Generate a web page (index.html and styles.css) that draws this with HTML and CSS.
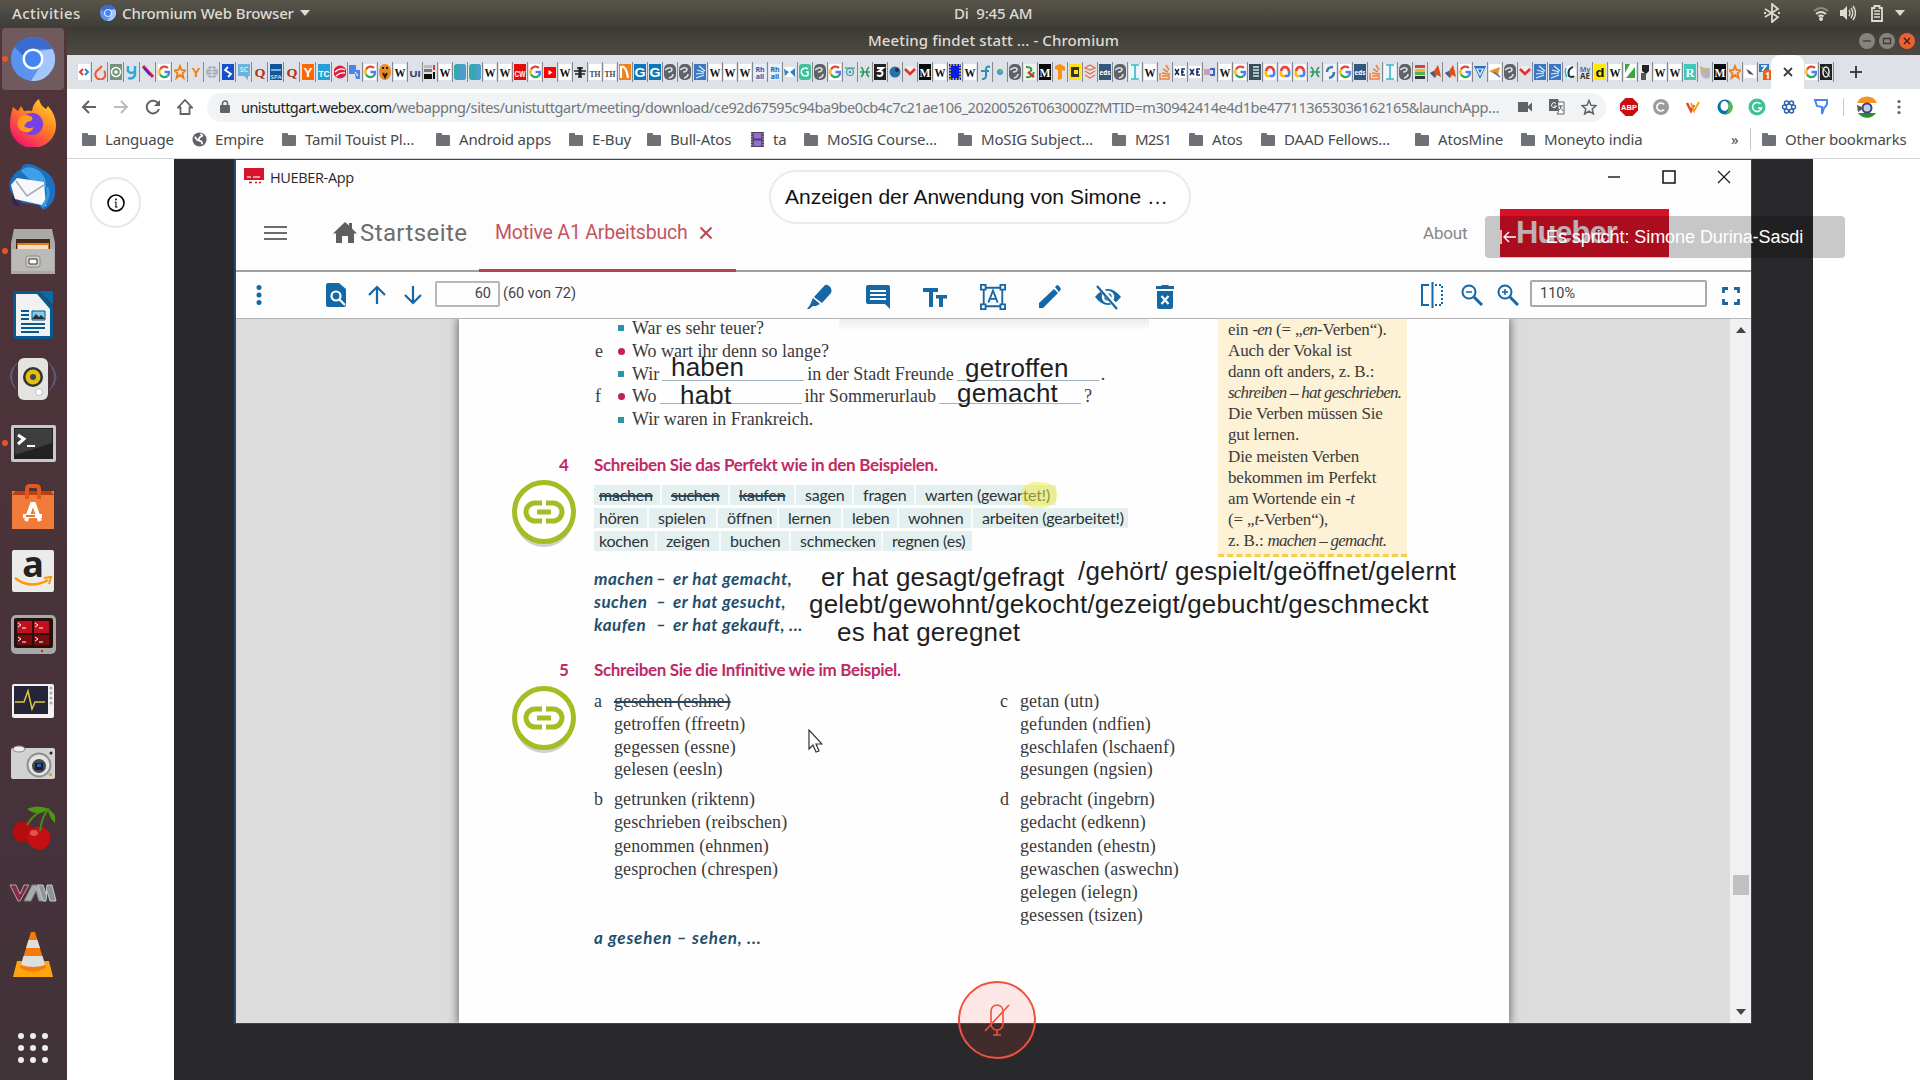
FILE: index.html
```html
<!DOCTYPE html>
<html lang="de">
<head>
<meta charset="utf-8">
<title>Meeting findet statt ... - Chromium</title>
<link rel="stylesheet" href="styles.css">
</head>
<body>
<div class="desktop">
  <header class="topbar">
    <span class="activities">Activities</span>
    <svg class="app-ico" viewBox="0 0 44 44"><use href="#chromium"/></svg>
    <span class="app-name">Chromium Web Browser</span>
    <i class="caret"></i>
    <span class="clock">Di&nbsp; 9:45 AM</span>
    <div class="tray">
      <svg class="bt" viewBox="0 0 18 20"><path d="M2 6l13 8-6 5V1l6 5L2 14M1 10h2M15 10h2" fill="none" stroke="#dfdbd2" stroke-width="1.8"/></svg>
      <svg class="wifi" viewBox="0 0 16 16"><g fill="none" stroke-width="2"><path d="M1 6q7-6 14 0" stroke="#8d8a83"/><path d="M3 9q5-4 10 0M5.500 11.500q2.500-2 5 0" stroke="#dfdbd2"/></g><circle cx="8" cy="14" r="2" fill="#dfdbd2"/></svg>
      <svg class="vol" viewBox="0 0 16 16"><path d="M0 5h3l4-4v14l-4-4H0z" fill="#dfdbd2"/><path d="M9 5q2 3 0 6M11 3q3.500 5 0 10M13 1q5 7 0 14" fill="none" stroke="#dfdbd2" stroke-width="1.400"/></svg>
      <svg class="bat" viewBox="0 0 12 17"><path d="M1 3h2.500V1h5v2H11v13H1z" fill="none" stroke="#dfdbd2" stroke-width="1.800"/><path d="M3 6h6M3 9h6M3 12h6" stroke="#dfdbd2" stroke-width="1.600"/></svg>
      <i class="caret"></i>
    </div>
  </header>

  <div class="workspace">
    <nav class="dock">
      <div class="dock-item active running"><svg viewBox="0 0 48 48"><use href="#chromium" x="2" y="2" width="44" height="44"/></svg></div>
      <div class="dock-item"><svg viewBox="0 0 48 48">
        <defs><linearGradient id="fx" x1="1" y1="0" x2="0.300" y2="1"><stop offset="0" stop-color="#ffe43f"/><stop offset=".45" stop-color="#ff8a1d"/><stop offset="1" stop-color="#f5156c"/></linearGradient></defs>
        <path d="M4 8l5 4 3-5 3 5q5-1 8 0 1-8 7-12 1 6 7 10l2-3q8 9 8 19a22.500 22 0 0 1-46 1Q1 16 4 8z" fill="url(#fx)"/>
        <circle cx="23" cy="25" r="11" fill="#7542e5"/><path d="M11 18q6-4 12 0 2 4-5 5l-3 4q5 4 10 1-4 9-14 3-5-6 0-13z" fill="#ff9a24"/></svg></div>
      <div class="dock-item"><svg viewBox="0 0 48 48">
        <path d="M14 2Q22-1 32 6q12 5 14 17 2 18-12 24l-4-5-16-2Q-2 32 1 18q4-9 10-11z" fill="#1f6fc0"/><path d="M12 8q6-7 17-1 9 6 8 18L20 16z" fill="#3fa0e8"/><path d="M8 15l27 4 2 24L6 36 2 22z" fill="#f8f8fa"/><path d="M7 18l11 15 17-11" fill="none" stroke="#a5aab5" stroke-width="1.500"/><path d="M3 33l5 6 4 6-8-4z" fill="#2b2266"/><path d="M38 24q4 10-5 20" stroke="#2d9be3" stroke-width="3" fill="none"/></svg></div>
      <div class="dock-item running"><svg viewBox="0 0 48 48"><path d="M5 2h38l3 14v31H2V16z" fill="#aaa9a6"/><path d="M7 12h34v10H7z" fill="#442a1a"/><path d="M8 16h32v6H8z" fill="#e07d22"/><path d="M9 18h30v4H9z" fill="#f5dfc4"/><path d="M3 22h42v22H3z" fill="#bcbab7"/><rect x="17" y="29" width="14" height="11" rx="2" fill="#d2d0cd" stroke="#888"/><path d="M20 32h8v5h-8z" fill="#fff" stroke="#333"/></svg></div>
      <div class="dock-item"><svg viewBox="0 0 48 48"><path d="M4 0h26l14 16v29q0 3-3 3H7q-3 0-3-3z" fill="#075a8d"/><path d="M30 0h14v14z" fill="#0b6aa5"/><path d="M7 3h21l13 15v27H7z" fill="#f1f1f1"/><path d="M12 20h8M12 24h8M12 28h8M12 33h24M12 37h24M12 41h18" stroke="#075a8d" stroke-width="2"/><path d="M23 20h13v9H23z" fill="#89c9ef" stroke="#075a8d"/><path d="M23 28l4-5 3 3 2-2 4 4z" fill="#233"/></svg></div>
      <div class="dock-item"><svg viewBox="0 0 48 48"><path d="M8 8Q-5 20 7 34M40 8q14 14 0 28M5 12q-5 10 0 20M43 12q5 10 0 20" fill="none" stroke="#59648f"/><rect x="9" y="3" width="30" height="42" rx="6" fill="#e3e3df"/><circle cx="24" cy="22" r="10" fill="#333"/><circle cx="24" cy="22" r="7.500" fill="#e1bf14"/><circle cx="24" cy="22" r="3" fill="#444"/><circle cx="30" cy="37" r="3.500" fill="#fff" stroke="#bbb"/></svg></div>
      <div class="dock-item running"><svg viewBox="0 0 48 48"><rect x="2" y="6" width="45" height="37" rx="2" fill="#c9c8c8"/><path d="M5 9h39v31H5z" fill="#222"/><path d="M6 10h37v14L6 36z" fill="#3d3e3f"/><path d="M9 16l6 4-6 5" fill="none" stroke="#fff" stroke-width="3"/><path d="M18 27h8" stroke="#fff" stroke-width="2"/></svg></div>
      <div class="dock-item"><svg viewBox="0 0 48 48"><path d="M3 8h42v38H3z" fill="#f07b3a"/><path d="M3 12l3-4h36l3 4z" fill="#b8420f"/><path d="M18 16V6q0-3 3-3h6q3 0 3 3v10" fill="none" stroke="#e2571e" stroke-width="4"/><path d="M17 38l6-17h2l6 17M14 33h19" fill="none" stroke="#fff" stroke-width="4"/><path d="M17 33h9" stroke="#f07030" stroke-width="2"/></svg></div>
      <div class="dock-item"><svg viewBox="0 0 48 48"><rect x="3" y="3" width="42" height="42" rx="2" fill="#ebebeb"/><text x="24" y="30" text-anchor="middle" class="amazon-a">a</text><path d="M6 31q15 12 33 2" fill="none" stroke="#f90" stroke-width="2.500"/><path d="M35 31l7-1-2 7" fill="none" stroke="#f90" stroke-width="2"/></svg></div>
      <div class="dock-item"><svg viewBox="0 0 48 48"><rect x="2" y="4" width="45" height="39" rx="5" fill="#a7a9a5"/><rect x="5" y="7" width="39" height="30" rx="2" fill="#26100f"/><path d="M8 10h15v12H8zM25 10h15v12H25z" fill="#c0101b"/><path d="M8 24h15v10H8zM25 24h15v10H25z" fill="#790a0d"/><path d="M9 12l3 2-3 2M13 17h4M26 12l3 2-3 2M30 17h4M9 26l3 2-3 2M13 31h4M26 26l3 2-3 2M30 31h4" stroke="#fff" fill="none"/><path d="M32 39h2v2h-2z" fill="#e11"/></svg></div>
      <div class="dock-item"><svg viewBox="0 0 48 48"><rect x="3" y="9" width="42" height="34" rx="2" fill="#f3f2ef"/><path d="M5 11h34v28H5z" fill="#262438"/><path d="M6 27h9l4-11 4 18 3-7h10" fill="none" stroke="#d8c93c" stroke-width="1.500"/><g fill="#aaa"><circle cx="42" cy="13" r="1.500"/><circle cx="42" cy="18" r="1.500"/><circle cx="42" cy="23" r="1.500"/><circle cx="42" cy="28" r="1.500"/></g></svg></div>
      <div class="dock-item"><svg viewBox="0 0 48 48"><rect x="2" y="9" width="44" height="31" rx="2" fill="#d2d2d0"/><ellipse cx="10" cy="10" rx="6" ry="3" fill="#eee" stroke="#888"/><circle cx="30" cy="26" r="12.500" fill="#8f8f8f"/><circle cx="30" cy="26" r="10.500" fill="#e4e4e4"/><circle cx="30" cy="27" r="7" fill="#4a4a4c"/><path d="M26 24h8v7h-8z" fill="#0c1d3e"/><path d="M28 25h4v3h-4z" fill="#2d64b6"/><path d="M40 34h3v3h-3z" fill="#f0a01e"/><circle cx="42" cy="14" r="1.500" fill="#222"/></svg></div>
      <div class="dock-item"><svg viewBox="0 0 48 48"><circle cx="14" cy="29" r="10.500" fill="#b30d10"/><circle cx="30" cy="35" r="11.500" fill="#c60f12"/><ellipse cx="25" cy="30" rx="4" ry="3" fill="#f08080" opacity=".6"/><path d="M18 22Q26 8 40 6M31 28q2-16 9-22" fill="none" stroke="#4a8c12" stroke-width="2"/><path d="M18 6q10-5 22 0-12 8-22 0zM39 6q9 4 7 14-6-5-7-14z" fill="#4c9a12"/></svg></div>
      <div class="dock-item"><svg viewBox="0 0 48 48"><path d="M1 18h6l4 9 4-9h5l-9 16H9z" fill="#8b2846" stroke="#aaa"/><path d="M15 34l8-16h7l6 16h-6l-3-10-5 10z" fill="#a8acae" stroke="#787c80"/><path d="M29 18h5l3 9 1-9h5l4 16h-6l-3-10-1 10h-3z" fill="#8f9496" stroke="#c4c7c9"/></svg></div>
      <div class="dock-item"><svg viewBox="0 0 48 48"><path d="M8 30h32l4 16H4z" fill="#ffa311"/><path d="M22 1h4l11 36q-13 7-26 0z" fill="#f57c0a"/><path d="M19.500 9h9l2.500 8H17zM14.500 25h19l2.500 9q-12 4-24 0z" fill="#dcdfe0"/></svg></div>
      <div class="dock-apps"><svg viewBox="0 0 30 30" fill="#eee"><circle cx="3" cy="3" r="3"/><circle cx="15" cy="3" r="3"/><circle cx="27" cy="3" r="3"/><circle cx="3" cy="15" r="3"/><circle cx="15" cy="15" r="3"/><circle cx="27" cy="15" r="3"/><circle cx="3" cy="27" r="3"/><circle cx="15" cy="27" r="3"/><circle cx="27" cy="27" r="3"/></svg></div>
    </nav>

    <main class="browser">
      <div class="titlebar">
        <span>Meeting findet statt ... - Chromium</span>
        <div class="win-buttons">
          <svg viewBox="0 0 16 16"><circle cx="8" cy="8" r="8" fill="#85837c"/><path d="M4 8h8" stroke="#3c3b37" stroke-width="1.300"/></svg>
          <svg viewBox="0 0 16 16"><circle cx="8" cy="8" r="8" fill="#85837c"/><path d="M4.500 5.500h7v5h-7z" fill="none" stroke="#3c3b37" stroke-width="1.300"/></svg>
          <svg viewBox="0 0 16 16"><circle cx="8" cy="8" r="8" fill="#ee5f33"/><path d="M5 5l6 6M11 5l-6 6" stroke="#40200f" stroke-width="1.400"/></svg>
        </div>
      </div>
      <div class="tabs" id="tabs"></div>
      <div class="toolbar">
        <svg viewBox="0 0 16 16"><path d="M15 8H2M8 2L2 8l6 6" fill="none" stroke="#5f6368" stroke-width="2"/></svg>
        <svg viewBox="0 0 16 16"><path d="M1 8h13M8 2l6 6-6 6" fill="none" stroke="#babcbe" stroke-width="2"/></svg>
        <svg viewBox="0 0 16 16"><path d="M13.500 5A6.300 6.300 0 1 0 14 10" fill="none" stroke="#5f6368" stroke-width="2"/><path d="M15 1v6H9z" fill="#5f6368"/></svg>
        <svg viewBox="0 0 16 16"><path d="M8 1L1 8.500h2.500V15h9V8.500H15z" fill="none" stroke="#5f6368" stroke-width="1.800"/></svg>
        <div class="omnibox">
          <svg class="lock" viewBox="0 0 10 14"><path d="M1 5h8q1 0 1 1v6q0 1-1 1H1q-1 0-1-1V6q0-1 1-1z" fill="#5f6368"/><path d="M2.500 6V3.500a2.500 2.500 0 0 1 5 0V6" fill="none" stroke="#5f6368" stroke-width="1.500"/></svg>
          <span class="url"><b>unistuttgart.webex.com</b>/webappng/sites/unistuttgart/meeting/download/ce92d67595c94ba9be0cb4c7c21ae106_20200526T063000Z?MTID=m30942414e4d1be477113653036162165&amp;launchApp…</span>
          <svg viewBox="0 0 16 16"><path d="M1 3h10v4l4-3.500v9L11 9v4H1z" fill="#5f6368"/></svg>
          <svg viewBox="0 0 16 16"><path d="M0 0h9l4 12H0z" fill="#5f6368"/><path d="M9 3h6v12H8l2-3" fill="#fff" stroke="#5f6368"/><path d="M7 4.500A2.500 2.500 0 1 0 7.500 7H5" fill="none" stroke="#fff"/><path d="M10 7h4M12 6q0 4-2 5M11 8l3 4" fill="none" stroke="#5f6368"/></svg>
          <svg viewBox="0 0 16 16"><path d="M8 1.500l2 4.700 5 .4-3.800 3.300 1.200 5L8 12.200 3.600 15l1.200-5L1 6.600l5-.4z" fill="none" stroke="#5f6368" stroke-width="1.500"/></svg>
        </div>
        <div class="extensions">
          <svg viewBox="0 0 18 18"><path d="M5.500 0h7L18 5.500v7L12.500 18h-7L0 12.500v-7z" fill="#c70d0d"/><text x="9" y="12.200" text-anchor="middle" class="abp">ABP</text></svg>
          <svg viewBox="0 0 18 18"><circle cx="9" cy="9" r="8" fill="#9b9b9b"/><path d="M12 6.500a4 4 0 1 0 0 5" fill="none" stroke="#fff" stroke-width="1.600"/></svg>
          <svg viewBox="0 0 18 18"><path d="M3 5l4 8 3-6" fill="none" stroke="#e2452c" stroke-width="2.400"/><path d="M7 5l3 8 5-9" fill="none" stroke="#f6a21b" stroke-width="2"/></svg>
          <svg viewBox="0 0 18 18"><circle cx="9" cy="9" r="7.500" fill="#0b6fa8"/><path d="M9 16.500A7.500 7.500 0 0 0 12 2q3 9-3 14.500z" fill="#58b848"/><ellipse cx="8.500" cy="8" rx="4" ry="5" fill="#fff"/></svg>
          <svg viewBox="0 0 18 18"><circle cx="9" cy="9" r="8.500" fill="#3fc299"/><path d="M12.500 6a4.500 4.500 0 1 0 1 4H10" fill="none" stroke="#fff" stroke-width="1.500"/></svg>
          <svg viewBox="0 0 18 18"><g fill="none" stroke="#2c65b0" stroke-width="1.500"><circle cx="6.500" cy="5" r="2"/><circle cx="11.500" cy="5" r="2"/><circle cx="4.500" cy="9" r="2"/><circle cx="13.500" cy="9" r="2"/><circle cx="6.500" cy="13" r="2"/><circle cx="11.500" cy="13" r="2"/></g></svg>
          <svg viewBox="0 0 18 18"><path d="M3 2h12q1 5-3 8l-2 6V9L5 8z" fill="none" stroke="#4285f4" stroke-width="2"/></svg>
        </div>
        <i class="sep"></i>
        <svg class="avatar" viewBox="0 0 24 24"><circle cx="12" cy="12" r="11" fill="#fff"/><path d="M2 8a11 11 0 0 1 20 0z" fill="#f79420"/><path d="M3 18a11 11 0 0 0 18 0z" fill="#2e8b2e"/><circle cx="12" cy="13" r="4.500" fill="#c9cde8" stroke="#36428c" stroke-width="2"/><path d="M2 10l7 3-6 4z" fill="#555"/></svg>
        <svg class="kebab" viewBox="0 0 4 16" fill="#5f6368"><circle cx="2" cy="2.500" r="1.600"/><circle cx="2" cy="8" r="1.600"/><circle cx="2" cy="13.500" r="1.600"/></svg>
      </div>
      <div class="bookmarks">
        <span><i class="folder"></i>Language</span>
        <span><svg viewBox="0 0 16 16"><circle cx="8" cy="8" r="7.500" fill="#5f6368"/><path d="M9 2l2 2-3 2-1 3 3 1 1 3M3 5l3 4" stroke="#fff" stroke-width="1.800" fill="none"/></svg>Empire</span>
        <span><i class="folder"></i>Tamil Touist Pl…</span>
        <span><i class="folder"></i>Android apps</span>
        <span><i class="folder"></i>E-Buy</span>
        <span><i class="folder"></i>Bull-Atos</span>
        <span><svg viewBox="0 0 16 16"><path d="M1 0h14v16H1z" fill="#4b4458"/><path d="M4 1h8v6H4zM4 9h8v6H4z" fill="#9a6bd8"/><path d="M2 1v14M14 1v14" stroke="#ddd" stroke-dasharray="1.500 1.500"/></svg>ta</span>
        <span><i class="folder"></i>MoSIG Course…</span>
        <span><i class="folder"></i>MoSIG Subject…</span>
        <span class="tight"><i class="folder"></i>M2S1</span>
        <span><i class="folder"></i>Atos</span>
        <span><i class="folder"></i>DAAD Fellows…</span>
        <span><i class="folder"></i>AtosMine</span>
        <span><i class="folder"></i>Moneyto india</span>
        <span class="more">»</span>
        <span class="other"><i class="folder"></i>Other bookmarks</span>
      </div>

      <div class="content">
        <div class="info-btn"><svg viewBox="0 0 18 18"><circle cx="9" cy="9" r="8" fill="none" stroke="#000" stroke-width="1.600"/><path d="M9 8v5M8 13h2.500M7.800 8H9" stroke="#000"/><circle cx="9" cy="5.500" r=".9"/></svg></div>
        <div class="stage">
          <section class="app">
            <div class="app-title">
              <svg viewBox="0 0 20 16"><path d="M0 0h20v12H0z" fill="#d6142c"/><path d="M3 9h4M9 9h7" stroke="#f3c3c8" stroke-width="1.500"/><path d="M5 14.500h3M11 14.500h2M15 14.500h2" stroke="#d6142c" stroke-width="1.500"/></svg>
              <span>HUEBER-App</span>
              <div class="app-win">
                <svg viewBox="0 0 14 14"><path d="M1 7h12" stroke="#222" stroke-width="1.500"/></svg>
                <svg viewBox="0 0 14 14"><path d="M1 1h12v12H1z" fill="none" stroke="#111" stroke-width="1.500"/></svg>
                <svg viewBox="0 0 14 14"><path d="M1 1l12 12M13 1L1 13" stroke="#222" stroke-width="1.300"/></svg>
              </div>
            </div>
            <div class="app-nav">
              <svg class="burger" viewBox="0 0 23 16"><path d="M0 2h23M0 8h23M0 14h23" stroke="#6c6c6c" stroke-width="2.200"/></svg>
              <svg class="home" viewBox="0 0 24 21"><path d="M12 0l4 3.500V1h3v5.500l5 5h-3V21h-6v-7H9v7H3v-9.500H0z" fill="#5f5f5f"/></svg>
              <span class="start">Startseite</span>
              <div class="book-tab"><span>Motive A1 Arbeitsbuch</span><svg viewBox="0 0 14 14"><path d="M1.500 1.500l11 11M12.500 1.500l-11 11" stroke="#c04450" stroke-width="2"/></svg></div>
              <span class="about">About</span>
              <div class="logo">Hueber</div>
            </div>
            <div class="app-tools">
              <div class="tools-left">
                <svg class="dots" viewBox="0 0 6 20" fill="#1567a5"><circle cx="3" cy="2.500" r="2.500"/><circle cx="3" cy="10" r="2.500"/><circle cx="3" cy="17.500" r="2.500"/></svg>
                <svg class="find" viewBox="0 0 20 24"><path d="M0 2q0-2 2-2h11l7 6v16q0 2-2 2H2q-2 0-2-2z" fill="#1567a5"/><circle cx="10" cy="13" r="4.500" fill="none" stroke="#fff" stroke-width="2.200"/><path d="M13 16l6 6" stroke="#fff" stroke-width="2.200"/></svg>
                <svg class="arr" viewBox="0 0 20 20"><path d="M10 19V2M2 10l8-8 8 8" fill="none" stroke="#1567a5" stroke-width="2.200"/></svg>
                <svg class="arr" viewBox="0 0 20 20"><path d="M10 1v17M2 10l8 8 8-8" fill="none" stroke="#1567a5" stroke-width="2.200"/></svg>
                <div class="page-no">60</div><span class="of">(60 von 72)</span>
              </div>
              <div class="tools-mid">
                <svg viewBox="0 0 26 26"><path d="M18 1q3-1 6 3 1 3 0 5l-9 10-8-6zM6 14l7 6-4 2H6l-4 3H0l3-4z" fill="#1567a5"/></svg>
                <svg viewBox="0 0 26 26"><path d="M3 1h20q2 0 2 2v22l-5-5H3q-2 0-2-2V3q0-2 2-2z" fill="#1567a5"/><path d="M5 7h16M5 11h16M5 15h16" stroke="#fff" stroke-width="2"/></svg>
                <svg viewBox="0 0 26 26"><path d="M1 4h15v4h-5v15H7V8H1zM14 11h11v3.500h-4V23h-4v-8.500h-3z" fill="#1567a5"/></svg>
                <svg class="wide" viewBox="0 0 28 28"><g fill="none" stroke="#1567a5" stroke-width="2"><path d="M4 4h20v20H4z"/><path fill="#fff" d="M1 1h5v5H1zM22 1h5v5h-5zM1 22h5v5H1zM22 22h5v5h-5z"/><path d="M9 20l5-13 5 13M11 16h6"/></g></svg>
                <svg viewBox="0 0 26 26"><path d="M2 19L17 5l4 4L6 24H2zM18 3l2-2q2 0 4 4l-2 3z" fill="#1567a5"/></svg>
                <svg class="wide" viewBox="0 0 28 26"><path d="M1 13Q14-3 27 13 14 29 1 13z" fill="#1567a5"/><circle cx="14" cy="13" r="5" fill="none" stroke="#fff" stroke-width="2.500"/><path d="M4 1l20 24" stroke="#fff" stroke-width="5"/><path d="M3 2l20 23" stroke="#1567a5" stroke-width="2.200"/></svg>
                <svg viewBox="0 0 26 26"><path d="M4 2h5l1-1h6l1 1h5v3H4zM5 7h16v16q0 2-2 2H7q-2 0-2-2z" fill="#1567a5"/><path d="M9.500 12l7 8M16.500 12l-7 8" stroke="#fff" stroke-width="2.200"/></svg>
              </div>
              <div class="tools-right">
                <svg viewBox="0 0 22 26"><path d="M8 3H1v20h7M11.500 0v26" fill="none" stroke="#1567a5" stroke-width="2"/><path d="M14 3h7v20h-7" fill="none" stroke="#1567a5" stroke-width="2" stroke-dasharray="2 2"/></svg>
                <svg class="mag" viewBox="0 0 22 22"><circle cx="8" cy="8" r="6.500" fill="none" stroke="#1567a5" stroke-width="2"/><path d="M13 13l8 8" stroke="#1567a5" stroke-width="3"/><path d="M5 8h6" stroke="#1567a5" stroke-width="1.500"/></svg>
                <svg class="mag" viewBox="0 0 22 22"><circle cx="8" cy="8" r="6.500" fill="none" stroke="#1567a5" stroke-width="2"/><path d="M13 13l8 8" stroke="#1567a5" stroke-width="3"/><path d="M5 8h6M8 5v6" stroke="#1567a5" stroke-width="1.500"/></svg>
                <div class="zoom-val">110%</div>
                <svg class="full" viewBox="0 0 18 18"><path d="M1.500 6V1.500H6M12 1.500h4.500V6M16.500 12v4.500H12M6 16.500H1.500V12" fill="none" stroke="#1567a5" stroke-width="2.800"/></svg>
              </div>
            </div>
            <div class="viewer">
              <div class="sheet">
                <div class="first">
                  <div class="dialog">
                    <p><b></b><i class="sq"></i>War es sehr teuer?</p>
                    <p><b>e</b><i class="rd"></i>Wo wart ihr denn so lange?</p>
                    <p><b></b><i class="sq"></i>Wir<u></u>in der Stadt Freunde<u></u><span class="end">.</span></p>
                    <p><b>f</b><i class="rd"></i>Wo<u></u>ihr Sommerurlaub<u></u>?</p>
                    <p><b></b><i class="sq"></i>Wir waren in Frankreich.</p>
                  </div>
                  <aside class="tip">
                    <p>ein <em>-en</em> (= „<em>en</em>-Verben“).</p>
                    <p>Auch der Vokal ist</p>
                    <p>dann oft anders, z. B.:</p>
                    <p><em>schreiben – hat geschrieben.</em></p>
                    <p>Die Verben müssen Sie</p>
                    <p>gut lernen.</p>
                    <p>Die meisten Verben</p>
                    <p>bekommen im Perfekt</p>
                    <p>am Wortende ein <em>-t</em></p>
                    <p>(= „<em>t</em>-Verben“),</p>
                    <p>z. B.: <em>machen – gemacht.</em></p>
                  </aside>
                </div>
                <div class="exercise ex4">
                  <span class="num">4</span>
                  <h2>Schreiben Sie das Perfekt wie in den Beispielen.</h2>
                  <svg class="link" viewBox="0 0 64 70"><use href="#linkicon"/></svg>
                  <div class="ex-body">
                    <div class="chips r1"><s>machen</s><s>suchen</s><s>kaufen</s><span>sagen</span><span>fragen</span><span>warten (gewartet!)</span><i class="marker"></i></div>
                    <div class="chips r2"><span>hören</span><span>spielen</span><span>öffnen</span><span>lernen</span><span>leben</span><span>wohnen</span><span>arbeiten (gearbeitet!)</span></div>
                    <div class="chips r3"><span>kochen</span><span>zeigen</span><span>buchen</span><span>schmecken</span><span>regnen (es)</span></div>
                    <div class="hand">
                      <p><span>machen</span><span>–</span><span>er hat gemacht,</span></p>
                      <p><span>suchen</span><span>–</span><span>er hat gesucht,</span></p>
                      <p><span>kaufen</span><span>–</span><span>er hat gekauft, ...</span></p>
                    </div>
                  </div>
                </div>
                <div class="exercise ex5">
                  <span class="num">5</span>
                  <h2>Schreiben Sie die Infinitive wie im Beispiel.</h2>
                  <svg class="link" viewBox="0 0 64 70"><use href="#linkicon"/></svg>
                  <div class="ex-body">
                    <div class="cols">
                      <div>
                        <dl><dt>a</dt><dd><s>gesehen (eshne)</s></dd><dd>getroffen (ffreetn)</dd><dd>gegessen (essne)</dd><dd>gelesen (eesln)</dd></dl>
                        <dl><dt>b</dt><dd>getrunken (riktenn)</dd><dd>geschrieben (reibschen)</dd><dd>genommen (ehnmen)</dd><dd>gesprochen (chrespen)</dd></dl>
                      </div>
                      <div>
                        <dl><dt>c</dt><dd>getan (utn)</dd><dd>gefunden (ndfien)</dd><dd>geschlafen (lschaenf)</dd><dd>gesungen (ngsien)</dd></dl>
                        <dl><dt>d</dt><dd>gebracht (ingebrn)</dd><dd>gedacht (edkenn)</dd><dd>gestanden (ehestn)</dd><dd>gewaschen (aswechn)</dd><dd>gelegen (ielegn)</dd><dd>gesessen (tsizen)</dd></dl>
                      </div>
                    </div>
                    <p class="hand last">a gesehen – sehen, ...</p>
                  </div>
                </div>
                <span class="note n1">haben</span>
                <span class="note n2">getroffen</span>
                <span class="note n3">habt</span>
                <span class="note n4">gemacht</span>
                <span class="note n5">er hat gesagt/gefragt</span>
                <span class="note n6">/gehört/ gespielt/geöffnet/gelernt</span>
                <span class="note n7">gelebt/gewohnt/gekocht/gezeigt/gebucht/geschmeckt</span>
                <span class="note n8">es hat geregnet</span>
                <svg class="pointer" viewBox="0 0 15 24"><path d="M1 1v19l4-4 3 7 3-1-3-7h6z" fill="#fff" stroke="#333" stroke-width="1.200"/></svg>
              </div>
              <div class="scroll"><i class="up"></i><i class="thumb"></i><i class="down"></i></div>
            </div>
          </section>
        </div>
        <div class="pill">Anzeigen der Anwendung von Simone …</div>
        <div class="speaker"><svg viewBox="0 0 16 14"><path d="M1 0v14M16 7H4M9 2L4 7l5 5" fill="none" stroke="#fff" stroke-width="1.400"/></svg><span>Es spricht: Simone Durina-Sasdi</span></div>
        <div class="mute"><svg viewBox="0 0 26 32"><g fill="none" stroke="#f0503c" stroke-width="1.600"><rect x="7" y="1" width="12" height="25" rx="6"/><path d="M13 26v5M9 31h8M25 1L1 27"/></g></svg></div>
      </div>
    </main>
  </div>
</div>

<svg width="0" height="0" class="defs">
  <symbol id="chromium" viewBox="0 0 44 44"><circle cx="22" cy="22" r="22" fill="#5b93f0"/><path d="M22 0a22 22 0 0 1 19.500 12H22a10 10 0 0 0-9.500 7L3.500 10A22 22 0 0 1 22 0z" fill="#3a6bd0"/><path d="M41.500 12A22 22 0 0 1 20 44l10-16q4-7-1-14z" fill="#a5c6fb"/><circle cx="22" cy="22" r="10.500" fill="#fff"/><circle cx="22" cy="22" r="8" fill="#4284f3"/></symbol>
  <symbol id="linkicon" viewBox="0 0 64 70"><ellipse cx="32" cy="36" rx="30" ry="31" fill="#000" opacity=".18"/><circle cx="32" cy="32" r="29.500" fill="#fff" stroke="#a3bd22" stroke-width="5"/><path d="M30 23h-7a9 9 0 0 0 0 18h7M34 23h7a9 9 0 0 1 0 18h-7" fill="none" stroke="#a3bd22" stroke-width="5"/><path d="M25 32h14" stroke="#a3bd22" stroke-width="5"/></symbol>
</svg>
<script src="script.js"></script>
</body>
</html>
```
FILE: styles.css
```css
* { box-sizing: border-box; }
body { margin: 0; background: #fff; }
p, h2, dl, dd { margin: 0; }
svg { display: block; flex: none; }
.defs { position: absolute; }
.desktop { width: 1920px; height: 1080px; overflow: hidden; display: flex; flex-direction: column; font-family: "Noto Sans", "Open Sans", sans-serif; }

/* top panel */
.topbar { flex: none; height: 27px; display: flex; align-items: center; padding: 0 0 2px 12px; background: linear-gradient(#59554b, #3e3d38); color: #dfdbd2; font-size: 15px; font-weight: 500; line-height: 20px; }
.activities { width: 88px; letter-spacing: .4px; }
.app-ico { width: 16px; height: 16px; margin-right: 6px; }
.app-name { width: 178px; letter-spacing: -.14px; }
.caret { border: 5px solid transparent; border-top: 6px solid #dfdbd2; border-bottom: 0; }
.clock { margin-left: 644px; width: 78px; margin-right: 731px; letter-spacing: -.15px; white-space: nowrap; }
.tray { display: flex; align-items: center; margin-top: 1px; }
.bt { width: 18px; height: 20px; margin-right: 32px; }
.wifi { width: 16px; height: 16px; margin-right: 11px; }
.vol { width: 16px; height: 16px; margin-right: 15px; }
.bat { width: 12px; height: 17px; margin-right: 12px; }

/* launcher */
.workspace { flex: 1; display: flex; min-height: 0; }
.dock { width: 67px; flex: none; display: flex; flex-direction: column; background: linear-gradient(#503439, #48333a 60%, #46323a 85%, #3f3438); }
.dock-item { height: 64px; flex: none; display: flex; align-items: center; justify-content: center; padding-right: 1px; position: relative; }
.dock-item svg { width: 48px; height: 48px; position: relative; }
.dock-item.active::after { content: ""; position: absolute; left: 2px; top: 1px; width: 62px; height: 62px; border-radius: 4px; background: rgba(255,255,255,.19); }
.dock-item.active svg { z-index: 1; }
.dock-item.running::before { content: ""; position: absolute; left: 2px; top: 29px; width: 6px; height: 6px; border-radius: 50%; background: #e95420; z-index: 2; }
.dock-apps { margin-top: 46px; padding-left: 18px; }
.dock-apps svg { width: 30px; height: 30px; }
.amazon-a { font: bold 36px "Noto Sans", sans-serif; fill: #222; }

/* browser chrome */
.browser { flex: 1; min-width: 0; display: flex; flex-direction: column; }
.titlebar { height: 28px; flex: none; display: flex; align-items: center; padding-left: 801px; background: linear-gradient(#3b3a36, #4e4b43); color: #dfdbd2; font-size: 15px; line-height: 20px; font-weight: 500; letter-spacing: .1px; }
.titlebar > span { padding-bottom: 2px; }
.win-buttons { display: flex; gap: 4px; margin-left: auto; padding-right: 5px; }
.win-buttons svg { width: 16px; height: 16px; }
.tabs { height: 34px; flex: none; display: flex; align-items: center; background: #dee1e6; padding-left: 10px; }
.tab { width: 15px; height: 20px; flex: none; display: flex; align-items: center; justify-content: center; border-right: 1px solid #85888d; }
.tab svg { width: 12px; height: 16px; }
.tab.lead { width: 15px; padding-right: 1px; }
.tab.mid { width: 16px; }
.tab.last { width: 13px; border: 0; }
.tab.current { width: 33px; height: 34px; background: #fff; border: 0; border-radius: 9px 9px 0 0; }
.tab.new { border: 0; width: 44px; }
.tab.new svg { overflow: visible; }

.toolbar { height: 37px; flex: none; display: flex; align-items: center; padding: 0 0 1px 14px; }
.toolbar > svg { width: 16px; height: 16px; margin-right: 16px; }
.omnibox { width: 1399px; height: 29px; margin-left: -2px; border-radius: 15px; background: #f1f3f4; display: flex; align-items: center; padding-left: 13px; }
.omnibox > svg { width: 16px; height: 16px; margin-right: 16px; }
.omnibox > svg.lock { width: 10px; height: 14px; margin-right: 11px; }
.url { width: 1276px; flex: none; padding-bottom: 1px; white-space: nowrap; font-size: 14.5px; letter-spacing: -.41px; color: #72767b; }
.url b { font-weight: 400; color: #202124; letter-spacing: -.55px; }
.extensions { display: flex; gap: 14px; margin-left: 14px; }
.extensions svg { width: 18px; height: 18px; }
.abp { font: bold 7.5px "Liberation Sans", sans-serif; fill: #fff; }
.sep { width: 1px; height: 18px; background: #c5c7ca; margin: 0 11px 0 13px; }
.toolbar > svg.avatar { width: 24px; height: 24px; margin-right: 18px; }
.toolbar > svg.kebab { width: 4px; height: 16px; margin: 0; }
.bookmarks { height: 33px; flex: none; display: grid; grid-template-columns: 110px 90px 154px 133px 78px 103px 54px 154px 154px 77px 72px 154px 106px 210px 19px 1fr; align-items: center; padding: 0 0 6px 15px; border-bottom: 1px solid #d4d6d9; font-size: 15px; line-height: 22px; letter-spacing: -.18px; color: #46494d; white-space: nowrap; }
.bookmarks > span { display: flex; align-items: center; gap: 8px; }
.bookmarks .tight { letter-spacing: -.75px; }
.bookmarks svg { width: 15px; height: 15px; }
.folder { width: 14px; height: 11px; margin: 2px 1px 0 0; border-radius: 1px; background: #6e7276; position: relative; }
.folder::before { content: ""; position: absolute; left: 0; top: -2px; width: 6px; height: 3px; border-radius: 1px; background: #6e7276; }
.bookmarks .other { border-left: 1px solid #c5c7ca; padding-left: 11px; }

/* meeting page */
.content { flex: 1; min-height: 0; position: relative; display: flex; padding-left: 107px; background: #fff; }
.info-btn { position: absolute; left: 23px; top: 18px; width: 51px; height: 51px; border: 2px solid #e8e8e8; border-radius: 50%; display: flex; align-items: center; justify-content: center; }
.info-btn svg { width: 18px; height: 18px; }
.stage { width: 1639px; background: #29282b; padding-left: 60px; }
.app { width: 1518px; height: 865px; border: 1px solid #274a66; border-left-width: 2px; background: #fdfdfd; display: flex; flex-direction: column; }
.app-title { height: 36px; flex: none; display: flex; align-items: center; padding: 0 0 2px 8px; font: 14.5px "Open Sans", sans-serif; letter-spacing: -.35px; color: #2a2a2a; }
.app-title > svg { width: 20px; height: 16px; margin: -2px 6px 0 0; }
.app-win { display: flex; gap: 41px; margin-left: auto; padding-right: 20px; }
.app-win svg { width: 14px; height: 14px; }
.app-nav { height: 76px; flex: none; display: flex; align-items: center; padding-left: 28px; border-bottom: 2px solid #a0a0a0; font-family: Roboto, sans-serif; }
.burger { width: 23px; height: 16px; margin-right: 46px; }
.home { width: 24px; height: 21px; margin-right: 3px; margin-top: -1px; }
.start { width: 119px; font-size: 24px; letter-spacing: .4px; color: #6d6d6d; }
.book-tab { width: 257px; height: 76px; display: flex; align-items: center; gap: 11px; padding: 0 0 1px 16px; border-bottom: 3px solid #b2454e; font-size: 19.500px; letter-spacing: -.2px; color: #c4545e; margin-bottom: -2px; }
.book-tab svg { width: 14px; height: 14px; margin-top: 1px; }
.about { margin-left: 687px; width: 77px; padding-bottom: 1px; font-size: 17px; letter-spacing: -.2px; color: #868686; }
.logo { width: 169px; height: 48px; background: #d91128; color: #f3dfe3; display: flex; align-items: center; padding-left: 16px; font: bold 31px "Liberation Sans", sans-serif; letter-spacing: -1px; }
.app-tools { height: 47px; flex: none; display: grid; grid-template-columns: 571px 614px 1fr; align-items: center; border-bottom: 1px solid #b5b5b5; font: 14.5px Roboto, sans-serif; color: #444; padding-bottom: 1px; }
.tools-left, .tools-mid, .tools-right { display: flex; align-items: center; }
.dots { width: 6px; height: 20px; margin: 0 64px 0 20px; }
.find { width: 20px; height: 24px; margin-right: 21px; }
.arr { width: 20px; height: 20px; margin-right: 16px; }
.page-no { width: 65px; height: 26px; margin: -2px 3px 0 -4px; border: 2px solid #b7b7b7; border-radius: 2px; text-align: right; padding-right: 7px; line-height: 22px; }
.of { margin-top: -2px; }
.tools-mid { gap: 31.500px; margin-top: 5px; }
.tools-mid svg { width: 26px; height: 26px; }
.tools-mid svg.wide { width: 28px; height: 26px; margin: 0 -1px; }
.tools-right svg { width: 22px; height: 26px; margin-right: 18px; }
.tools-right svg.mag { width: 22px; height: 22px; margin-right: 14px; }
.tools-right svg.full { width: 18px; height: 18px; margin: 2px 0 0 15px; }
.zoom-val { width: 177px; height: 27px; margin: -3px 0 0 -3px; border: 2px solid #a9a9a9; border-radius: 2px; padding-left: 8px; line-height: 23px; }

/* workbook page */
.viewer { flex: 1; min-height: 0; display: flex; justify-content: space-between; padding-left: 223px; background: #dcdcdc; overflow: hidden; }
.sheet { width: 1050px; height: 100%; position: relative; padding-left: 53px; background: #fefefe; box-shadow: 0 0 9px 1px rgba(0,0,0,.55); font: 18px/22.8px "Liberation Serif", serif; color: #3a3a3c; }
.sheet::before { content: ""; position: absolute; left: 380px; top: 0; width: 310px; height: 12px; background: linear-gradient(#ececec, rgba(254,254,254,0)); }
.scroll { width: 21px; background: #f1f0f3; display: flex; flex-direction: column; align-items: center; }
.scroll i { flex: none; }
.up { margin-top: 8px; border: 5px solid transparent; border-bottom: 6px solid #444; border-top: 0; }
.thumb { margin-top: 542px; width: 16px; height: 20px; background: #c1c1c4; }
.down { margin-top: 114px; border: 5px solid transparent; border-top: 6px solid #444; border-bottom: 0; }

.first { height: 135px; display: flex; padding-left: 82px; }
.dialog { width: 624px; margin-top: -2px; }
.dialog p { display: flex; align-items: center; height: 22.8px; white-space: pre; }
.dialog b { width: 24px; padding-left: 1px; font-weight: 400; }
.dialog i { width: 6px; height: 6px; margin-right: 8px; background: #2b95a8; flex: none; }
.dialog i.rd { width: 7px; height: 7px; margin-right: 7px; border-radius: 50%; background: #c0205f; }
.dialog u { width: 142px; height: 1px; margin: 14px 3px 0 3px; background: #9fb3bd; }
.dialog .end { margin-left: -1px; }
.tip { width: 189px; height: 238px; padding-left: 10px; background: #fef2d6; border-bottom: 3px dashed #f3d14d; font-size: 17px; line-height: 21.1px; letter-spacing: -.15px; }
.tip p { white-space: nowrap; }
.tip em { letter-spacing: -.77px; }

.exercise { display: grid; grid-template-columns: 82px 915px; }
.num, h2 { font: 700 17px/22px Lato, sans-serif; letter-spacing: -.32px; color: #bf2a66; }
.num { padding-left: 47px; }
.link { width: 64px; height: 70px; }
.ex4 .link { margin-top: 4px; }
.ex5 .link { margin-top: 5px; }
.ex-body { min-width: 0; }
.ex4 .ex-body { padding-top: 9px; }
.chips { width: max-content; height: 20px; margin-bottom: 3px; display: grid; position: relative; background: #e3f0ef; font: 16px/20px Lato, sans-serif; letter-spacing: -.22px; color: #2c3338; }
.chips > span, .chips > s { padding-left: 9px; white-space: nowrap; border-left: 2px solid #f7fbfb; }
.chips > :first-child { border: 0; padding-left: 5px; }
.r1 { grid-template-columns: 66px 68px 66px 58px 62px 142px; }
.r2 { grid-template-columns: 53px 69px 61px 64px 56px 74px 157px; }
.r3 { grid-template-columns: 61px 64px 70px 92px 91px; }
.marker { position: absolute; right: -1px; top: -3px; width: 36px; height: 26px; border-radius: 45%; background: rgba(240,236,60,.5); }
.hand { font: italic 700 17px/23px Lato, sans-serif; letter-spacing: .5px; color: #1f4f6b; }
.ex4 .hand { padding-top: 13px; }
.hand p { display: grid; grid-template-columns: 62px 17px 1fr; }
.hand.last { letter-spacing: .8px; }
.ex5 { margin-top: 23px; }
.ex5 .ex-body { padding-top: 9px; }
.cols { display: grid; grid-template-columns: 406px 1fr; height: 236px; }
dl { display: grid; grid-template-columns: 20px 1fr; line-height: 22.8px; margin-bottom: 7px; white-space: nowrap; letter-spacing: .08px; }
dl + dl { line-height: 23.2px; }
dd { grid-column: 2; }
s { text-decoration-thickness: 2px; text-decoration-color: #27485c; }

/* typed annotations */
.note { position: absolute; font: 26px/30px "Liberation Sans", sans-serif; letter-spacing: .17px; color: #1f1f1f; white-space: nowrap; }
.n1 { left: 212px; top: 33px; }
.n2 { left: 506px; top: 34px; }
.n3 { left: 221px; top: 61px; }
.n4 { left: 498px; top: 59px; }
.n5 { left: 362px; top: 243px; }
.n6 { left: 619px; top: 237px; }
.n7 { left: 350px; top: 270px; }
.n8 { left: 378px; top: 298px; }
.pointer { position: absolute; left: 349px; top: 410px; width: 15px; height: 24px; }

.pill { position: absolute; left: 702px; top: 11px; width: 422px; height: 54px; border: 2px solid #eaeaea; border-radius: 27px; background: #fff; padding-left: 14px; font: 21px/50px "Liberation Sans", sans-serif; color: #111; white-space: nowrap; }
.speaker { position: absolute; left: 1418px; top: 57px; width: 360px; height: 42px; border-radius: 4px; background: rgba(0,0,0,.21); display: flex; align-items: center; gap: 30px; padding-left: 15px; font: 18px "Liberation Sans", sans-serif; letter-spacing: -.06px; color: #fff; }
.speaker svg { width: 16px; height: 14px; }
.mute { position: absolute; left: 891px; top: 822px; width: 78px; height: 78px; border: 2px solid #f0503c; border-radius: 50%; background: rgba(244,67,54,.12); display: flex; align-items: center; justify-content: center; }
.mute svg { width: 26px; height: 32px; }
```
FILE: script.js
```js
const text = (t, fill, bg, font) =>
  (bg ? `<rect width="12" height="16" fill="${bg}"/>` : '') +
  `<text x="6" y="13" text-anchor="middle" fill="${fill}" font-family="${font || 'Liberation Sans'}" font-weight="bold" font-size="${t.length > 1 ? 9 : 13}" textLength="${'dYR'.includes(t) ? 9 : 11}" lengthAdjust="spacingAndGlyphs">${t}</text>`;
const line = (d, c, w = 2) => `<path d="${d}" fill="none" stroke="${c}" stroke-width="${w}"/>`;
const box = (c, x = 0, y = 0, w = 12, h = 16) => `<rect x="${x}" y="${y}" width="${w}" height="${h}" fill="${c}"/>`;

// Favicons, drawn in a 12x16 box
const ICONS = {
  code: box('#fff') + line('M5 5L2 8l3 3', '#e53935') + line('M7 5l3 3-3 3', '#1e88e5'),
  ring: line('M8 2L4 6a5 5 0 1 0 6 1', '#ee5a38'),
  target: box('#76927a') + '<circle cx="6" cy="8" r="4.500" fill="none" stroke="#fff" stroke-width="1.500"/><circle cx="6" cy="8" r="1.800" fill="#fff"/>',
  script: line('M2 2v5q3 4 7 0V2v9q-2 5-7 3', '#29a9e0', 2.400),
  feather: line('M1 2l10 11', '#c9234b', 3) + line('M2 4l6 7', '#4a2bc4', 2),
  g: box('#fff') + line('M10 4A5 5 0 0 0 2 5.500', '#ea4335', 2.400) + line('M2 5.500a5 5 0 0 0 0 5', '#fbbc05', 2.400) + line('M2 10.500a5 5 0 0 0 7.500 1.500', '#34a853', 2.400) + line('M9.500 12Q11 11 11 8H6.500', '#4285f4', 2.400),
  star: line('M6 2l1.500 4 4 .4-3 3 1 4.600L6 11l-3.500 3 1-4.600-3-3 4-.4z', '#ef7d1b', 1.800),
  y: text('Y', '#f07c17'),
  web: '<circle cx="6" cy="8" r="6" fill="#9aa4b2"/>' + line('M1 5h10M1 8h10M1 11h10M6 2v12', '#e8ebef', 1),
  diamond: box('#1450c8') + line('M6 3L3 6l6 4-3 3', '#fff', 1.800),
  sc: box('#6ab4e2', 0, 0, 12, 12) + '<path d="M5 11l5 5v-5z" fill="#6ab4e2"/><text x="6" y="8" text-anchor="middle" font-size="7" fill="#fff">SC</text>',
  q: text('Q', '#b0321a', '', 'Liberation Serif'),
  spa: box('#11569b') + '<text x="6" y="15" text-anchor="middle" font-size="6" fill="#fff" textLength="11">SPA</text>' + line('M1 6h10', '#7fb0e0'),
  yb: text('Y', '#fff', '#ff6600'),
  tc: text('TC', '#fff', '#25a0da'),
  swirl: '<circle cx="6" cy="8" r="6.500" fill="#d8213f"/>' + line('M1 8q5-5 10-2M2 12q4-4 9-3', '#fff', 1.300),
  tr: '<path d="M0 1h7v9H0zM5 6h6v9H7z" fill="#4a86e8"/>' + line('M6 8l3 4', '#cfe0ff', 1.300),
  jen: '<ellipse cx="6" cy="8" rx="6" ry="8" fill="#e98a24"/>' + line('M3 4h2M7 4h2M4 9l2 4 2-4', '#2a1a10'),
  w: text('W', '#111', '#fff', 'Liberation Serif'),
  ui: text('UI', '#2b3f66'),
  bars: box('#bbb', 0, 1, 8, 3) + box('#777', 0, 5, 8, 3) + box('#111', 0, 10, 8, 5) + box('#e33', 9, 1, 2, 5) + box('#111', 9, 8, 2, 7),
  teal: '<rect width="12" height="16" rx="3" fill="#35a9ad"/><rect x="6" width="6" height="16" rx="3" fill="#4b9fd0"/>',
  cw: text('CW', '#fff', '#e60c0c'),
  yt: box('#f00', 0, 3, 12, 11) + '<path d="M4.500 6l4 2.500-4 2.500z" fill="#fff"/>',
  bug: line('M3 4h6M0 7h12M1 10h10M4 13h4', '#222', 1.300) + line('M6 3v10', '#222', 3),
  th: text('TH', '#444', '#fff', 'Liberation Serif'),
  n: box('#ef8121') + line('M2 14V3q5-2 7 11', '#fff', 2.200),
  gb: text('G', '#fff', '#1075bd'),
  three: '<rect width="12" height="16" rx="5" fill="#5f6368"/>' + line('M1 6q5-4 7-1 0 3-4 3M5 14q4-1 4-4', '#dee1e6', 1.600),
  diag: box('#3b78c3') + line('M2 14L10 11M2 10l8-1M3 6l7 2M5 2l6 5', '#e5eefb', 1.200),
  rh: '<rect width="12" height="16" fill="#e8eefa"/><text x="6" y="8" text-anchor="middle" font-size="7" font-weight="bold" fill="#2b5aa8">Rh</text><text x="6" y="15" text-anchor="middle" font-size="7" font-weight="bold" fill="#2b5aa8">all</text>',
  fly: box('#fff', 1, 3, 10, 10) + '<path d="M0 5l5 3-4 4zM11 4L6 8l5 5z" fill="#3584c4"/>',
  c: '<rect width="12" height="16" rx="3" fill="#3fc299"/>' + line('M9 5a4 4 0 1 0 0 6V8H7', '#fff', 1.600),
  spiral: '<circle cx="6" cy="8" r="3.500" fill="none" stroke="#31a2a8" stroke-width="1.200"/><circle cx="6" cy="8" r="1.300" fill="#31a2a8"/>' + line('M1 4h10', '#31a2a8', 1.200),
  pisces: line('M2 3q5 5 0 10M10 3q-5 5 0 10M1 8h10', '#2d9a64', 1.700),
  three2: box('#222') + line('M3 4h6L5 7q5 0 3 4-2 2-5 0', '#fff', 2),
  wolf: '<circle cx="6" cy="8" r="5.500" fill="#2c6fa8"/><circle cx="8" cy="6" r="2" fill="#1c3550"/>',
  vee: box('#eee', 2, 2, 8, 5) + line('M1 5l5 5 5-5', '#e0312b', 2.600),
  m: text('M', '#fff', '#0b0b0b', 'Liberation Serif'),
  eu: box('#0a1ee0') + '<rect x="1" y="1" width="10" height="14" fill="none" stroke="#ffe600" stroke-width="1.500" stroke-dasharray="1.500 1.500"/>',
  f: line('M11 3q-4-2-4 3v6q0 3-4 3M2 7h8', '#2f8fb0', 2),
  leaf: '<circle cx="6" cy="8" r="3" fill="#3a9ad8"/><circle cx="7" cy="7" r="1.500" fill="#6ac24a"/>',
  pepper: box('#f3f3ee') + line('M2 3q8 0 4 5M2 13q6 1 8-5', '#2e9b3a') + line('M4 8l6 5', '#d33', 2.500),
  tf: '<path d="M1 2l5-2 5 3v4l-3-1v9l-4 1V6L1 5z" fill="#ff8f12"/>',
  yel: box('#ffe11a') + box('#333', 2, 3, 8, 10) + box('#ffe11a', 5, 6, 4, 4),
  layers: line('M1 4l5 2 5-2-5-3zM1 7l5 3 5-3M1 11l5 3 5-3', '#ef6a4c', 1.300),
  eds: box('#34577d') + '<text x="6" y="11" text-anchor="middle" font-size="7" font-weight="bold" fill="#fff" textLength="11" lengthAdjust="spacingAndGlyphs">eds</text>',
  beam: box('#eef8f9') + line('M2 1h8M2 15h8M6 1v14', '#3ab6c6', 1.600),
  so: line('M1 9v6h9v-6M3 12h6M3 9l6 1M4 5l5 3M7 1l3 5', '#ef8236', 1.500),
  xc: box('#fff', 0, 2, 12, 12) + line('M1 5l4 6M5 5l-4 6M11 5H8v6h3M7 8h3', '#1d2d60', 1.500),
  pink: box('#c79bc4', 0, 5, 6, 6) + line('M6 5h4v6H6', '#4166c2', 2),
  rows: box('#36505c') + line('M4 3h6M4 6h6M4 9h6M4 12h6', '#dfe6ea', 1.400),
  cloud: '<path d="M0 0h12v16H0z" fill="#f6f7fa"/>' + line('M2 7q1-4 4-4t4 4', '#ea4335', 2.600) + line('M10 7q1 5-2 5H6', '#4285f4', 2.600) + line('M2 7q-1 5 2 5h2', '#fbbc05', 2.600),
  cc: box('#f2f2f2') + line('M9 3Q3 3 3 8M5 14q5-1 5-6', '#3a7dba', 2.600),
  rainbow: box('#e23d3d', 1, 1, 10, 3) + box('#efb62c', 1, 5, 10, 3) + box('#53b04c', 1, 8, 10, 3) + box('#2b3a3a', 1, 12, 10, 3),
  matlab: '<path d="M1 9l4-2 4-6q2 6 3 12l-4-2-2 3z" fill="#d9521e"/><path d="M1 9l4-2 1 7z" fill="#2a63a4"/>',
  tri: '<path d="M0 2h12L6 15z" fill="#1f74c8"/>' + line('M3 5h6L6 11z', '#fff', 1.200),
  kite: box('#fff') + '<path d="M0 7l11-4-2 9z" fill="#f0912a"/>' + line('M5 8l6 5', '#3c74b8', 1.600),
  pen: '<circle cx="6" cy="8" r="6.500" fill="#fff"/>' + line('M9 3q-6 2-4 9 3 2 5 0', '#1b3c4a') + line('M2 4q-2 5 1 9', '#28b0c0', 1.500),
  mymc: '<text x="6" y="8" text-anchor="middle" font-size="7" font-weight="bold" fill="#3e77ac">My</text><text x="6" y="15" text-anchor="middle" font-size="8" font-weight="bold" fill="#333" textLength="10" lengthAdjust="spacingAndGlyphs">AE</text>',
  d: text('d', '#111', '#ffeb00'),
  sprout: box('#fff') + '<path d="M1 0h5L1 9zM11 3v11H2z" fill="#3ba83a"/>',
  man: box('#eee') + '<path d="M3 1h7v6l-3 3-4-3z" fill="#222"/>' + box('#555', 2, 9, 5, 7),
  r: text('R', '#fff', '#40c9b8', 'Liberation Serif'),
  cat: '<path d="M1 2l4 2h6v9q-5 4-9-2z" fill="#b3b6ba"/>' + line('M2 3l4 5', '#e8b23d'),
  bird: box('#fff', 0, 1, 12, 13) + '<path d="M2 5l4 2 4 4-5-1z" fill="#555"/>',
  z: box('#3078bd', 0, 0, 10, 8) + box('#e8641c', 4, 6, 8, 10) + line('M2 2h5L3 7', '#fff', 1.500) + line('M7 10l2-1v6', '#fff', 1.500),
  knot: box('#222') + '<ellipse cx="6" cy="8" rx="3" ry="5" fill="none" stroke="#eee" stroke-width="1.500"/>' + line('M2 3l8 10', '#eee', 1),
  x: line('M2 4l8 8M10 4l-8 8', '#3c4043', 1.800),
  plus: line('M6 2v12M0 8h12', '#3c4043', 2)
};

const TABS = `code ring target script feather g star y web diamond sc q spa q yb tc swirl
 tr g jen w ui bars w teal teal w w cw g yt w bug th th n gb gb
 three three diag w w w rh rh fly c three g spiral pisces three2 wolf vee m w eu w f leaf three
 pepper m tf yel layers eds three beam w so xc xc pink w g rows
 cloud cloud cloud pisces cc g eds so beam three rainbow matlab matlab g tri kite three vee
 diag diag pen mymc d w sprout man w w r cat m star bird z x g knot plus`.trim().split(/\s+/);

document.getElementById('tabs').innerHTML = TABS.map((name, i) => {
  const kind = i === 0 ? 'lead' : i < 17 ? 'mid' : name === 'z' ? 'last' : name === 'x' ? 'current' : name === 'plus' ? 'new' : '';
  return `<div class="tab ${kind}"><svg viewBox="0 0 12 16">${ICONS[name]}</svg></div>`;
}).join('');
```
